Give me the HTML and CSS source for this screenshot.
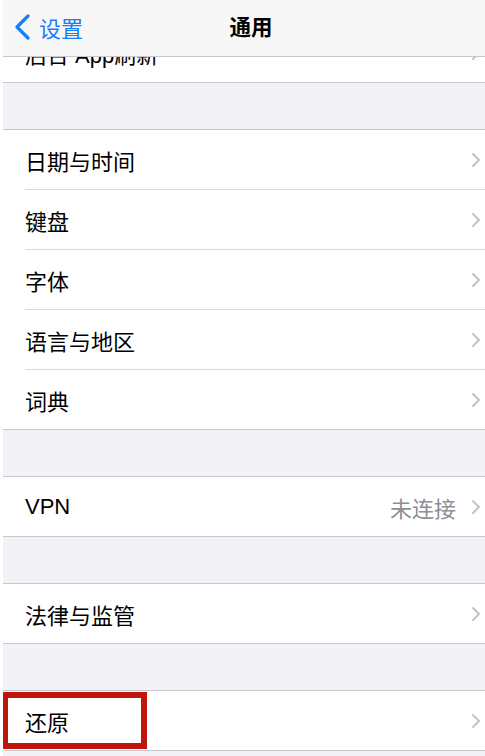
FILE: index.html
```html
<!DOCTYPE html>
<html lang="zh-CN">
<head>
    <meta charset="UTF-8">
    <meta name="viewport" content="width=device-width, initial-scale=1.0">
    <title>通用</title>
    <link rel="stylesheet" href="styles.css">
</head>
<body>
    <div class="screen">
        <div class="nav-bar">
            <div class="nav-back">
                <svg class="back-icon" width="18" height="26" viewBox="0 0 18 26">
                    <polyline points="14,2 3,13 14,24" fill="none" stroke="#157efb" stroke-width="3.2" stroke-linecap="round" stroke-linejoin="round"/>
                </svg>
                <span>设置</span>
            </div>
            <div class="nav-title">通用</div>
        </div>

        <div class="settings">
            <div class="group group-first">
                <div class="row"><span class="label">后台 App刷新</span><svg class="chevron" viewBox="0 0 10 16"><polyline points="2,2 8,8 2,14"/></svg></div>
            </div>

            <div class="gap"></div>

            <div class="group">
                <div class="row"><span class="label">日期与时间</span><svg class="chevron" viewBox="0 0 10 16"><polyline points="2,2 8,8 2,14"/></svg></div>
                <div class="row"><span class="label">键盘</span><svg class="chevron" viewBox="0 0 10 16"><polyline points="2,2 8,8 2,14"/></svg></div>
                <div class="row"><span class="label">字体</span><svg class="chevron" viewBox="0 0 10 16"><polyline points="2,2 8,8 2,14"/></svg></div>
                <div class="row"><span class="label">语言与地区</span><svg class="chevron" viewBox="0 0 10 16"><polyline points="2,2 8,8 2,14"/></svg></div>
                <div class="row"><span class="label">词典</span><svg class="chevron" viewBox="0 0 10 16"><polyline points="2,2 8,8 2,14"/></svg></div>
            </div>

            <div class="gap"></div>

            <div class="group">
                <div class="row"><span class="label">VPN</span><span class="detail">未连接</span><svg class="chevron" viewBox="0 0 10 16"><polyline points="2,2 8,8 2,14"/></svg></div>
            </div>

            <div class="gap"></div>

            <div class="group">
                <div class="row"><span class="label">法律与监管</span><svg class="chevron" viewBox="0 0 10 16"><polyline points="2,2 8,8 2,14"/></svg></div>
            </div>

            <div class="gap"></div>

            <div class="group">
                <div class="row"><span class="label">还原</span><svg class="chevron" viewBox="0 0 10 16"><polyline points="2,2 8,8 2,14"/></svg>
                    <div class="mark"></div>
                </div>
            </div>
        </div>
    </div>
</body>
</html>
```

FILE: styles.css
```css
* {
    box-sizing: border-box;
}

body {
    margin: 0;
    padding: 0 0 0 3px;
    background-color: #ffffff;
    font-family: "Liberation Sans", "Noto Sans CJK SC", sans-serif;
}

.screen {
    position: relative;
    height: 756px;
    overflow: hidden;
    background-color: #f2f2f7;
}

.nav-bar {
    position: absolute;
    top: 0;
    left: 0;
    right: 0;
    height: 57px;
    background-color: #f7f7f7;
    border-bottom: 1px solid #c8c7cc;
    display: flex;
    align-items: center;
    justify-content: center;
    z-index: 2;
}

.nav-back {
    position: absolute;
    left: 11px;
    top: 11px;
    display: flex;
    align-items: center;
    gap: 7px;
    color: #157efb;
    font-size: 22px;
}

.nav-title {
    font-size: 21.5px;
    font-weight: 600;
    color: #000000;
    margin-left: 14px;
    margin-top: -5px;
}

.settings {
    padding-top: 23px;
}

.group {
    background-color: #ffffff;
    border-top: 1px solid #c8c7cc;
    border-bottom: 1px solid #c8c7cc;
}

.group-first {
    border-top: none;
}

.gap {
    height: 46px;
}

.row {
    position: relative;
    height: 60px;
    margin-left: 22px;
    padding-right: 4px;
    display: flex;
    align-items: center;
    border-bottom: 1px solid #d9d9dd;
    font-size: 22px;
    color: #000000;
}

.row:last-child {
    border-bottom: none;
    height: 59px;
}

.label {
    flex: 1;
}

.detail {
    color: #8e8e93;
    margin-right: 15px;
}

.chevron {
    width: 10px;
    height: 16px;
    fill: none;
    stroke: #c4c4c7;
    stroke-width: 2;
    stroke-linecap: round;
    stroke-linejoin: round;
}

.mark {
    position: absolute;
    left: -22px;
    top: 1px;
    width: 144px;
    height: 57px;
    border: 6px solid #c0150c;
    border-left-width: 5px;
}
```
